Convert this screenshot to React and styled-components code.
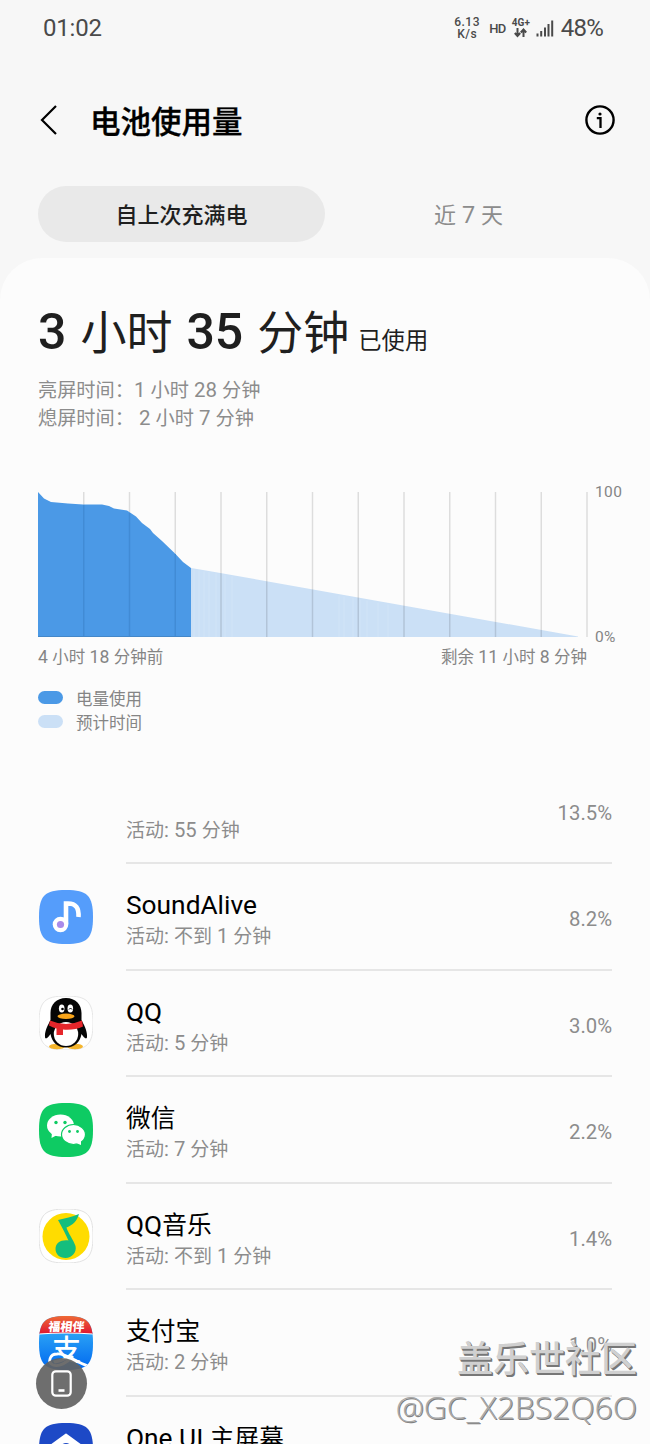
import React from 'react'
import styled, { createGlobalStyle } from 'styled-components'

const GlobalStyle = createGlobalStyle`
  * {
    box-sizing: border-box;
  }

  body {
    margin: 0;
    background: #f7f7f7;
    font-family: Roboto, 'Noto Sans CJK SC', sans-serif;
  }
`

const SQUIRCLE =
  'M27 0C38 0 44.500 1.500 48.500 5.500S54 16 54 27 52.500 44.500 48.500 48.500 38 54 27 54 9.500 52.500 5.500 48.500 0 38 0 27 1.500 9.500 5.500 5.500 16 0 27 0Z'

const GRID_LINES = Array.from({ length: 12 }, (_, i) => (i + 1) * 45.75)

const APPS = [
  { name: '', active: '55 分钟', percent: '13.5%' },
  { name: 'SoundAlive', active: '不到 1 分钟', percent: '8.2%', icon: SoundAliveIcon },
  { name: 'QQ', active: '5 分钟', percent: '3.0%', icon: QQIcon },
  { name: '微信', active: '7 分钟', percent: '2.2%', icon: WechatIcon },
  { name: 'QQ音乐', active: '不到 1 分钟', percent: '1.4%', icon: QQMusicIcon },
  { name: '支付宝', active: '2 分钟', percent: '1.0%', icon: AlipayIcon },
  { name: 'One UI 主屏幕', active: '1 分钟', percent: '0.8%', icon: OneUIIcon },
]

export default function App() {
  return (
    <Screen>
      <GlobalStyle />
      <StatusBar>
        <Clock>01:02</Clock>
        <StatusIcons />
        <Battery>48%</Battery>
      </StatusBar>

      <Header>
        <BackIcon />
        <Title>电池使用量</Title>
        <InfoIcon />
      </Header>

      <Tabs>
        <Tab $active>自上次充满电</Tab>
        <Tab>
          <Mixed text="近 7 天" />
        </Tab>
      </Tabs>

      <Card>
        <Usage>
          <b>3</b> 小时 <b>35</b> 分钟<UsageNote>已使用</UsageNote>
        </Usage>
        <ScreenTime>
          <div>
            <Mixed text="亮屏时间：1 小时 28 分钟" />
          </div>
          <div>
            <Mixed text="熄屏时间： 2 小时 7 分钟" />
          </div>
        </ScreenTime>

        <ChartRow>
          <Chart />
          <Scale>
            <span>100</span>
            <span>0%</span>
          </Scale>
        </ChartRow>
        <ChartLabels>
          <span>
            <Mixed text="4 小时 18 分钟前" />
          </span>
          <span>
            <Mixed text="剩余 11 小时 8 分钟" />
          </span>
        </ChartLabels>

        <Legend>
          <LegendItem>
            <Swatch $color="#4b99e6" />
            <span>电量使用</span>
          </LegendItem>
          <LegendItem>
            <Swatch $color="#cbe0f6" />
            <span>预计时间</span>
          </LegendItem>
        </Legend>

        <AppList>
          {APPS.map(({ name, active, percent, icon: Icon }) => (
            <AppRow key={percent}>
              <IconSlot>{Icon && <Icon />}</IconSlot>
              <AppBody>
                <AppText>
                  <AppName>
                    <Mixed text={name} />
                  </AppName>
                  <AppActive>
                    <Mixed text={`活动: ${active}`} />
                  </AppActive>
                </AppText>
                <Percent>{percent}</Percent>
              </AppBody>
            </AppRow>
          ))}
        </AppList>
      </Card>

      <FloatingButton>
        <PhoneIcon />
      </FloatingButton>
      <Watermark>
        <Community>盖乐世社区</Community>
        <Author>@GC_X2BS2Q6O</Author>
      </Watermark>
    </Screen>
  )
}

const Latin = styled.span`
  font-size: 1.065em;
  line-height: 1;
`

// Latin letters and digits are set slightly larger than the Chinese text
function Mixed({ text }) {
  return text
    .split(/([\x20-\x7e]+)/)
    .map((part, i) => (i % 2 ? <Latin key={i}>{part}</Latin> : part))
}

const Screen = styled.div`
  position: relative;
  width: 650px;
  height: 1444px;
  overflow: hidden;
  background: #f7f7f7;
  color: #1f1f1f;
`

const StatusBar = styled.div`
  display: flex;
  align-items: center;
  height: 56px;
  padding: 0 47px 0 43px;
  color: #4a4a4a;
`

const Clock = styled.div`
  flex: 1;
  font-size: 24px;
  line-height: 56px;
  letter-spacing: -0.2px;
`

const Battery = styled.div`
  margin-left: 7px;
  font-size: 24px;
  letter-spacing: -0.8px;
  line-height: 54px;
`

const StatusGroup = styled.div`
  display: flex;
  align-items: center;
  gap: 6px;
`

const Speed = styled.div`
  width: 30px;
  font-size: 12px;
  font-weight: 500;
  line-height: 12px;
  letter-spacing: 0.5px;
  text-align: center;
`

const Hd = styled.div`
  padding-left: 1px;
  font-size: 13px;
  font-weight: 500;
  line-height: 15px;
  letter-spacing: -0.5px;
`

const Network = styled.div`
  display: flex;
  flex-direction: column;
  align-items: center;
  width: 18px;
  font-size: 10px;
  font-weight: 700;
  line-height: 10px;
`

function StatusIcons() {
  return (
    <StatusGroup>
      <Speed>
        <div>6.13</div>
        <div>K/s</div>
      </Speed>
      <Hd>HD</Hd>
      <Network>
        4G+
        <svg width="13" height="10" viewBox="0 0 13 10">
          <path
            d="M3.500 0V8M0.800 5L3.500 8L6.200 5M9.500 9V2M6.800 4.500L9.500 1.500L12.200 4.500"
            fill="none"
            stroke="#4a4a4a"
            strokeWidth="2"
          />
        </svg>
      </Network>
      <svg width="18" height="17" viewBox="0 0 18 17">
        <path
          d="M0.500 13.500H2.500V16.500H0.500ZM4.200 11H6.200V16.500H4.200ZM8 7.500H10V16.500H8ZM11.500 4H13.500V16.500H11.500ZM15.200 0.500H17.200V16.500H15.200Z"
          fill="#4a4a4a"
        />
      </svg>
    </StatusGroup>
  )
}

const Header = styled.div`
  display: flex;
  align-items: center;
  height: 130px;
  padding: 0 35px 2px 40px;
`

const Title = styled.div`
  flex: 1;
  padding: 5px 0 0 33px;
  color: #000;
  font-size: 30.500px;
  font-weight: 500;
  line-height: 40px;
  -webkit-text-stroke: 0.3px #000;
`

function BackIcon() {
  return (
    <svg width="17" height="30" viewBox="0 0 17 30">
      <path d="M16 1L2 15L16 29" fill="none" stroke="#000" strokeWidth="2.200" />
    </svg>
  )
}

function InfoIcon() {
  return (
    <svg width="30" height="30" viewBox="0 0 30 30">
      <circle cx="15" cy="15" r="13.600" fill="none" stroke="#000" strokeWidth="2.400" />
      <circle cx="15" cy="9" r="1.600" />
      <path d="M11.800 13.200H15.500V23" fill="none" stroke="#000" strokeWidth="2.300" />
    </svg>
  )
}

const Tabs = styled.div`
  display: flex;
  height: 72px;
  padding: 0 38px 16px;
`

const Tab = styled.div`
  width: 287px;
  border-radius: 28px;
  background: ${p => (p.$active ? '#e9e9e9' : 'transparent')};
  color: ${p => (p.$active ? '#1f1f1f' : '#8c8c8c')};
  font-size: 22px;
  font-weight: ${p => (p.$active ? 500 : 400)};
  line-height: 59px;
  text-align: center;
`

const Card = styled.div`
  height: 1200px;
  padding: 43px 38px 0;
  border-radius: 42px 42px 0 0;
  background: #fcfcfc;
`

const Usage = styled.div`
  height: 72px;
  font-size: 46px;
  line-height: 62px;
  word-spacing: 2.600px;
  white-space: nowrap;

  b {
    font-size: 50px;
    font-weight: 500;
  }
`

const UsageNote = styled.span`
  margin-left: 9px;
  font-size: 23.300px;
`

const ScreenTime = styled.div`
  height: 119px;
  padding-top: 4px;
  color: #8c8c8c;
  font-size: 19.200px;
  line-height: 28px;
  white-space: pre;
`

const ChartRow = styled.div`
  display: flex;
  height: 145px;

  svg {
    flex: none;
  }
`

const Scale = styled.div`
  display: flex;
  flex-direction: column;
  justify-content: space-between;
  margin: -9px 0 -9px 7px;
  color: #858585;
  font-size: 15.500px;
  line-height: 18px;
  letter-spacing: 0.4px;
`

const ChartLabels = styled.div`
  display: flex;
  justify-content: space-between;
  width: 549px;
  height: 50px;
  padding-top: 9px;
  color: #858585;
  font-size: 16.500px;
  line-height: 24px;
`

function Chart() {
  return (
    <svg width="550" height="145" viewBox="0 0 550 145">
      <path d="M153 76L168 78.500L540 144.500V145H153Z" fill="#cbe0f6" />
      {[156, 161, 166, 171, 178, 187, 194, 301, 306, 315, 322, 329, 340, 350].map(x => (
        <path key={x} d={`M${x} ${77 + (x - 153) * 0.18}V145`} stroke="#d1e4f7" />
      ))}
      {GRID_LINES.map(x => (
        <path key={x} d={`M${x} 0V145`} stroke="#000" strokeOpacity="0.120" strokeWidth="1.500" />
      ))}
      <path
        d="M0 0L6 6.500L13 10L30 11.500L45 12.500H64L71 14L76 16.500L89 18.500L98 24.500L104 31L112 37L115 41L124 49L137 61.500L145 70L153 76V145H0Z"
        fill="#4b99e6"
      />
      <path d="M45.750 13V145M91.500 21V145M137.250 62V145" stroke="#418bd5" strokeWidth="1.500" />
      <path d="M0 144.500H153" stroke="#4487c8" />
    </svg>
  )
}

const Legend = styled.div`
  display: flex;
  flex-direction: column;
  height: 70.500px;
`

const LegendItem = styled.div`
  display: flex;
  align-items: center;
  gap: 13px;
  height: 23.500px;
  color: #858585;
  font-size: 16.500px;
  line-height: 23px;

  span {
    padding-top: 2px;
  }
`

const Swatch = styled.div`
  width: 25px;
  height: 13px;
  margin-bottom: 2px;
  border-radius: 7px;
  background: ${p => p.$color};
`

const AppList = styled.div`
  display: flex;
  flex-direction: column;
`

const AppRow = styled.div`
  display: flex;
  height: 106.600px;
`

const IconSlot = styled.div`
  flex: none;
  width: 88px;
  padding: 25.500px 0 0 1px;
`

const AppBody = styled.div`
  display: flex;
  justify-content: space-between;
  width: 486px;
  border-bottom: 2px solid #e6e6e6;
`

const AppText = styled.div`
  padding-top: 25px;
  white-space: nowrap;
`

const AppName = styled.div`
  height: 34px;
  color: #000;
  font-size: 24.700px;
  line-height: 34px;
`

const AppActive = styled.div`
  color: #8c8c8c;
  font-size: 19px;
  line-height: 28px;
`

const Percent = styled.div`
  padding-top: 41px;
  color: #8c8c8c;
  font-size: 20.300px;
  line-height: 28px;
`

function AppIcon({ children }) {
  return (
    <svg width="54" height="54" viewBox="0 0 54 54">
      {children}
    </svg>
  )
}

function SoundAliveIcon() {
  return (
    <AppIcon>
      <path d={SQUIRCLE} fill="#559dfb" />
      <path
        d="M27 34V13.500H29C37 13.500 40 18 39.500 27"
        fill="none"
        stroke="#fff"
        strokeWidth="4.600"
      />
      <circle cx="21.500" cy="34.500" r="7.800" fill="#fff" />
      <circle cx="21.500" cy="34.500" r="3.600" fill="#a98bea" />
    </AppIcon>
  )
}

function QQIcon() {
  return (
    <AppIcon>
      <path d={SQUIRCLE} fill="#fff" stroke="#e6e6e6" />
      <ellipse cx="18" cy="50.500" rx="8" ry="2.800" fill="#f5b52c" />
      <ellipse cx="36" cy="50.500" rx="8" ry="2.800" fill="#f5b52c" />
      <path
        d="M27 2C17.500 2 11.500 8.500 11.500 17V24C9 29 5.500 35 6 41C6.300 44 9 42 11.500 38C13 46 18 51.500 27 51.500S41 46 42.500 38C45 42 47.700 44 48 41C48.500 35 45 29 42.500 24V17C42.500 8.500 36.500 2 27 2Z"
        fill="#050505"
      />
      <ellipse cx="27" cy="38" rx="12.200" ry="12" fill="#fff" />
      <ellipse cx="22.700" cy="12.500" rx="2.800" ry="4" fill="#fff" />
      <ellipse cx="31.300" cy="12.500" rx="2.800" ry="4" fill="#fff" />
      <circle cx="23.500" cy="13" r="1.300" />
      <path d="M30 13.500Q31.500 10.500 33 13.500" fill="none" stroke="#000" />
      <ellipse cx="27" cy="20.300" rx="8.500" ry="2.700" fill="#f9a51a" />
      <path
        d="M11 24.500Q27 31.500 43 24.500L44 30.500Q35 34.500 24 33.500V39H17.500V32.500Q13.500 31.500 10 29.500Z"
        fill="#e6262b"
      />
    </AppIcon>
  )
}

function WechatIcon() {
  return (
    <AppIcon>
      <path d={SQUIRCLE} fill="#0ecb63" />
      <path d="M13 29L12.500 35L19 31.500Z" fill="#fff" />
      <ellipse cx="21.500" cy="22.500" rx="13.500" ry="11" fill="#fff" />
      <ellipse
        cx="34.500"
        cy="31.500"
        rx="12"
        ry="10"
        fill="#fff"
        stroke="#0ecb63"
        strokeWidth="1.200"
      />
      <path d="M37 40L42 42L42 36.500Z" fill="#fff" />
      <circle cx="17" cy="19.500" r="1.700" fill="#0ecb63" />
      <circle cx="26" cy="19.500" r="1.700" fill="#0ecb63" />
      <circle cx="30.500" cy="28.500" r="1.400" fill="#0ecb63" />
      <circle cx="38.500" cy="28.500" r="1.400" fill="#0ecb63" />
    </AppIcon>
  )
}

function QQMusicIcon() {
  return (
    <AppIcon>
      <path d={SQUIRCLE} fill="#fff" stroke="#e2e2e2" />
      <circle cx="27" cy="27.500" r="23.500" fill="#ffdc00" />
      <path
        d="M19 11C26 9 33 8 40 5C38 12 34 16 27.500 18.500C29 24 34.500 31 36.500 37C38 43 33 49 26.500 49C20.500 49 16.500 45 16.500 40C16.500 34 22 30.500 29.500 31.500C27 26 24 20 19 11Z"
        fill="#14be7d"
      />
    </AppIcon>
  )
}

const IconText = styled.text`
  fill: #fff;
  font-family: 'Noto Sans CJK SC', sans-serif;
  font-size: ${p => p.$size}px;
  font-weight: ${p => p.$weight};
  text-anchor: middle;
`

function AlipayIcon() {
  return (
    <AppIcon>
      <defs>
        <linearGradient id="alipayBlue" x1="0" y1="0" x2="0" y2="1">
          <stop offset="0.300" stopColor="#2ba2f5" />
          <stop offset="1" stopColor="#0068f0" />
        </linearGradient>
        <linearGradient id="alipayRed" x1="0" y1="0" x2="0" y2="1">
          <stop offset="0" stopColor="#ef6a35" />
          <stop offset="1" stopColor="#df1530" />
        </linearGradient>
        <clipPath id="alipayClip">
          <path d={SQUIRCLE} />
        </clipPath>
      </defs>
      <g clipPath="url(#alipayClip)">
        <path d="M0 0H54V54H0Z" fill="url(#alipayBlue)" />
        <path d="M0 18V0H54V18Q27 16 0 18Z" fill="url(#alipayRed)" />
        <path d="M0 18Q27 16 54 18" fill="none" stroke="#fff" strokeWidth="1.200" />
        <IconText x="28.500" y="14.800" $size={12} $weight={900} transform="skewX(-6)">
          福相伴
        </IconText>
        <IconText x="27.500" y="45" $size={29} $weight={500}>
          支
        </IconText>
        <path
          d="M34 40C28 47 20 51 14 49C8 46 11 38 18 38C27 37 35 45 49 50"
          fill="none"
          stroke="#fff"
          strokeWidth="2.800"
        />
      </g>
    </AppIcon>
  )
}

function OneUIIcon() {
  return (
    <AppIcon>
      <path d={SQUIRCLE} fill="#1d49c6" />
      <path
        d="M27 11.500L42 22.500V40H12V22.500Z"
        fill="#fff"
        stroke="#fff"
        strokeWidth="2"
        strokeLinejoin="round"
      />
      <circle cx="27" cy="26" r="6" fill="#1d49c6" />
    </AppIcon>
  )
}

const FloatingButton = styled.div`
  position: absolute;
  top: 1358px;
  left: 36px;
  display: flex;
  align-items: center;
  justify-content: center;
  width: 51px;
  height: 51px;
  border-radius: 50%;
  background: rgba(98, 98, 98, 0.920);
`

function PhoneIcon() {
  return (
    <svg width="21" height="27" viewBox="0 0 21 27">
      <rect
        x="1.300"
        y="1.300"
        width="18.400"
        height="24.400"
        rx="3.500"
        fill="none"
        stroke="#fff"
        strokeWidth="2.200"
      />
      <path d="M7.500 20.500H13.500" stroke="#fff" strokeWidth="2.600" />
    </svg>
  )
}

const Watermark = styled.div`
  position: absolute;
  top: 1338px;
  right: 13px;
  display: flex;
  flex-direction: column;
  align-items: flex-end;
  white-space: nowrap;
`

const Community = styled.div`
  color: #d0d0d0;
  font-size: 36px;
  font-weight: 500;
  line-height: 45px;
  text-shadow: 1px 1px 0 #777, 1.500px 1.500px 0 #777;
`

const Author = styled.div`
  color: #a8a8a8;
  font-family: 'Open Sans', 'Noto Sans', sans-serif;
  font-size: 31.800px;
  font-weight: 300;
  line-height: 48px;
  text-shadow: 1px 1px 0 #808080;
`
